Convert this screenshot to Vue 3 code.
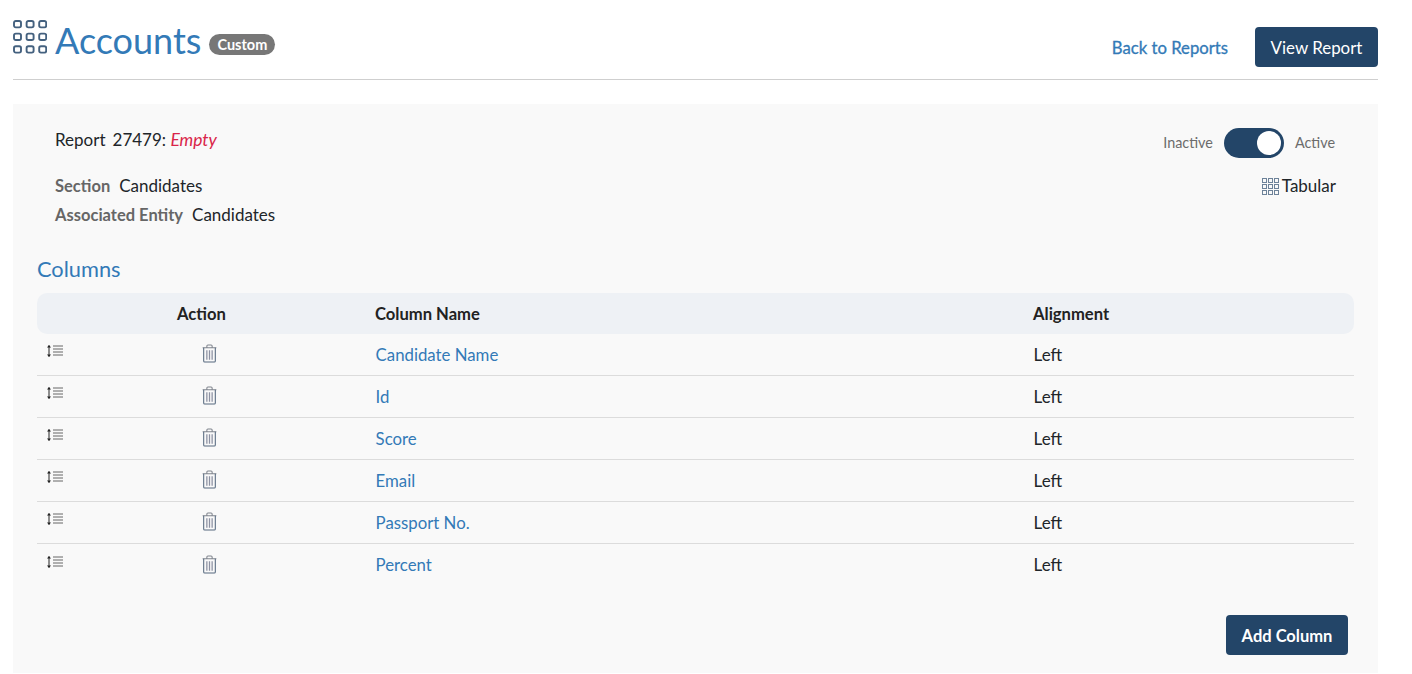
<script setup>
const rows = ['Candidate Name', 'Id', 'Score', 'Email', 'Passport No.', 'Percent']
const cells = [0, 1, 2]
</script>

<template>
  <div class="page">
    <header class="head">
      <div class="title">
        <svg class="grid-big" viewBox="0 0 34 34" width="34" height="34" fill="none" stroke="#44617f" stroke-width="1.9">
          <template v-for="r in cells" :key="r">
            <rect v-for="c in cells" :key="c" :x="1 + c * 12.6" :y="1 + r * 12.6" width="7" height="6.4" rx="1.8" />
          </template>
        </svg>
        <h1>Accounts</h1>
        <span class="badge">Custom</span>
      </div>
      <div class="actions">
        <a class="back">Back to Reports</a>
        <button class="btn view">View Report</button>
      </div>
    </header>

    <section class="panel">
      <div class="meta">
        <div class="meta-left">
          <div class="report"><span class="label">Report</span>27479: <em>Empty</em></div>
          <div class="line first"><b>Section</b><span>Candidates</span></div>
          <div class="line"><b>Associated Entity</b><span>Candidates</span></div>
        </div>
        <div class="meta-right">
          <div class="toggle-row">
            <span>Inactive</span>
            <div class="toggle"><i></i></div>
            <span>Active</span>
          </div>
          <div class="tabular">
            <svg viewBox="0 0 17 17" width="17" height="17" fill="none" stroke="#6d8299" stroke-width="1">
              <template v-for="r in cells" :key="r">
                <rect v-for="c in cells" :key="c" :x="0.5 + c * 6" :y="0.5 + r * 6" width="4" height="4" />
              </template>
            </svg>
            <span>Tabular</span>
          </div>
        </div>
      </div>

      <h2>Columns</h2>
      <div class="table">
        <div class="row th">
          <div></div>
          <div class="action-h">Action</div>
          <div>Column Name</div>
          <div>Alignment</div>
        </div>
        <div class="row td" v-for="name in rows" :key="name">
          <div class="drag">
            <svg viewBox="0 0 18 14" width="18" height="14" fill="none" stroke="#444" stroke-width="1">
              <path d="M3 1.5V12.5" stroke="#222" />
              <path d="M1 3.5 3 1 5 3.5ZM1 10.5 3 13 5 10.5Z" fill="#222" stroke="none" />
              <path d="M7 2H17M7 5H17M7 8H17M7 11H17" stroke="#666" />
            </svg>
          </div>
          <div class="trash">
            <svg viewBox="0 0 14 18" width="15" height="19" fill="none" stroke="#56697f" stroke-width="1">
              <path d="M0.5 3.5H13.5M4.5 3.5V2Q4.5 1 5.5 1H8.5Q9.5 1 9.5 2V3.5" stroke="#80858e" />
              <path d="M1.5 3.5V16Q1.5 17 2.5 17H11.5Q12.5 17 12.5 16V3.5" />
              <path d="M4.5 6V15M7 6V15M9.5 6V15" stroke="#8c91a2" stroke-width="1.2" />
            </svg>
          </div>
          <a class="name">{{ name }}</a>
          <div class="align">Left</div>
        </div>
      </div>
      <div class="foot">
        <button class="btn add">Add Column</button>
      </div>
    </section>
  </div>
</template>

<style>
html, body { margin: 0; background: #fff; }
</style>

<style scoped>
.page {
  width: 1365px;
  margin-left: 13px;
  font-family: Lato, "Open Sans", sans-serif;
  font-size: 16px;
  color: #212529;
}
.head {
  height: 79px;
  border-bottom: 1px solid #cfcfcf;
  display: flex;
  justify-content: space-between;
}
.title {
  display: flex;
  align-items: flex-start;
  padding-top: 20px;
}
.grid-big { display: block; }
h1 {
  margin: -3px 0 0 8px;
  font-size: 36px;
  line-height: 46px;
  font-weight: 400;
  color: #337ab7;
}
.badge {
  margin: 14px 0 0 8px;
  height: 21px;
  line-height: 21px;
  padding: 0 8px;
  border-radius: 11px;
  background: #777;
  color: #fff;
  font-size: 14.5px;
  font-weight: 700;
}
.actions {
  display: flex;
  align-items: flex-start;
  padding-top: 27px;
}
.back {
  margin: 11px 27px 0 0;
  color: #337ab7;
  font-size: 16.7px;
  line-height: 20px;
  -webkit-text-stroke: 0.3px #337ab7;
}
.btn {
  border: 0;
  border-radius: 4px;
  background: #234568;
  color: #fff;
  font-family: inherit;
  height: 40px;
  padding: 0;
}
.view { width: 123px; font-size: 16.9px; }
.panel {
  margin-top: 24px;
  height: 569px;
  background: #f9f9f9;
  padding: 0 24px;
}
.meta {
  display: flex;
  justify-content: space-between;
  height: 150px;
}
.meta-left { padding: 26px 0 0 18px; }
.report { line-height: 20px; font-size: 17px; }
.report .label { margin-right: 7px; }
.report em { color: #d9254a; font-size: 17.4px; }
.line { display: flex; gap: 9px; line-height: 20px; margin-top: 9px; font-size: 17px; }
.line.first { margin-top: 26px; }
.line b { color: #666; font-weight: 700; font-size: 16.5px; }
.meta-right {
  padding: 24px 18px 0 0;
  display: flex;
  flex-direction: column;
  align-items: flex-end;
}
.toggle-row {
  display: flex;
  align-items: center;
  gap: 11px;
  font-size: 14.4px;
  color: #6c6c6c;
  margin-right: 1px;
  line-height: 28px;
}
.toggle {
  width: 60px;
  height: 30px;
  border-radius: 15px;
  background: #234568;
  position: relative;
}
.toggle i {
  position: absolute;
  right: 3px;
  top: 3px;
  width: 24px;
  height: 24px;
  border-radius: 50%;
  background: #fff;
}
.tabular {
  margin-top: 18px;
  display: flex;
  align-items: center;
  gap: 3px;
  font-size: 17px;
  line-height: 20px;
}
h2 {
  margin: 2px 0 0;
  font-size: 21.8px;
  line-height: 26px;
  height: 37px;
  font-weight: 400;
  color: #337ab7;
}
.table { width: 1317px; }
.row {
  display: grid;
  grid-template-columns: 100px 238px 658px 1fr;
  align-items: center;
}
.th {
  height: 41px;
  background: #eef1f5;
  border-radius: 10px;
  font-weight: 700;
  font-size: 16.6px;
  color: #222;
}
.action-h { padding-left: 40px; }
.td {
  height: 42px;
  border-bottom: 1px solid #dcdcdc;
  box-sizing: border-box;
}
.td:last-child { border-bottom: 0; }
.drag { padding-left: 9px; height: 14px; margin-top: -7px; }
.drag svg, .trash svg { display: block; }
.trash { padding-left: 65px; margin-top: -2px; }
.name { color: #337ab7; font-size: 16.8px; padding-left: 0.6px; line-height: 20px; }
.align { font-size: 17px; line-height: 20px; padding-left: 0.6px; }
.foot {
  display: flex;
  justify-content: flex-end;
  margin-top: 29px;
  width: 1311px;
}
.add { width: 122px; font-size: 16.5px; font-weight: 700; padding-top: 1px; }
</style>
